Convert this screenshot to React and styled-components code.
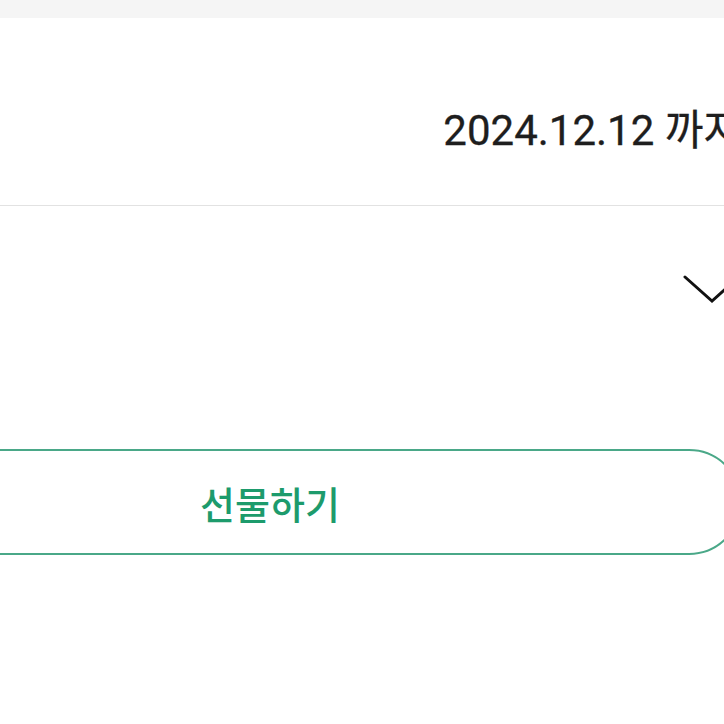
import React from "react";
import styled, { createGlobalStyle } from "styled-components";

const Global = createGlobalStyle`
  html, body { margin: 0; padding: 0; background: #ffffff; }
  body { overflow: hidden; font-family: Roboto, "Noto Sans CJK KR", sans-serif; }
`;

const Viewport = styled.div`
  width: 724px;
  height: 724px;
  overflow: hidden;
  background: #ffffff;
`;

const TopStrip = styled.div`
  height: 18px;
  background: #f5f5f5;
`;

const Canvas = styled.div`
  width: 1000px;
  margin-left: -230px;
`;

const DateRow = styled.div`
  height: 188px;
  border-bottom: 1px solid #e2e2e2;
  display: flex;
  justify-content: flex-end;
  align-items: flex-start;
  padding: 88px 28px 0 0;
  box-sizing: border-box;
`;

const DateText = styled.span`
  font-family: Roboto, "Noto Sans CJK KR", sans-serif;
  font-size: 42px;
  font-weight: 400;
  line-height: 50px;
  color: #1e1e1e;
  white-space: nowrap;
  -webkit-text-stroke: 0.3px #1e1e1e;
`;

const ToggleRow = styled.div`
  display: flex;
  justify-content: flex-end;
  padding: 68px 29px 0 0;
`;

const Chevron = styled.svg`
  display: block;
  width: 58px;
  height: 30px;
`;

const GiftButton = styled.button`
  display: flex;
  align-items: center;
  justify-content: center;
  box-sizing: border-box;
  width: 944px;
  height: 106px;
  margin: 145px 28px 0 28px;
  border: 2px solid #4aa888;
  border-radius: 53px;
  background: #ffffff;
  color: #1d9b6c;
  font-family: "Noto Sans CJK KR", sans-serif;
  font-size: 38px;
  font-weight: 500;
  padding: 0;
`;

export default function App() {
  return (
    <>
      <Global />
      <Viewport>
        <TopStrip />
        <Canvas>
          <DateRow>
            <DateText>2024.12.12 까지</DateText>
          </DateRow>
          <ToggleRow>
            <Chevron viewBox="0 0 58 30" fill="none">
              <path d="M2 3 L29 27 L56 3" stroke="#111" strokeWidth="3" strokeLinecap="round" strokeLinejoin="miter" />
            </Chevron>
          </ToggleRow>
          <GiftButton>선물하기</GiftButton>
        </Canvas>
      </Viewport>
    </>
  );
}
